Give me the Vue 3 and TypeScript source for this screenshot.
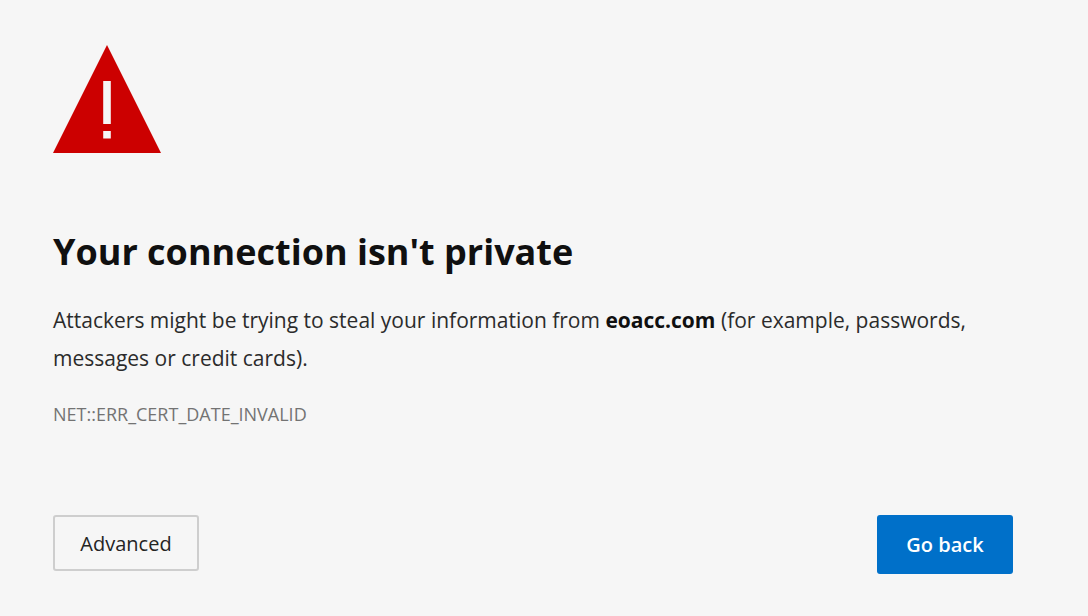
<script setup lang="ts">
import { ref } from 'vue'

const host = ref<string>('eoacc.com')
const errorCode = ref<string>('NET::ERR_CERT_DATE_INVALID')

function goBack(): void {
  window.history.back()
}
</script>

<template>
  <main class="page">
    <svg class="warning" viewBox="0 0 108 108" role="img" aria-label="Warning">
      <path d="M54 0 108 108H0Z" fill="#cc0000" />
      <path d="M50.2 36h7.6v43h-7.6zM50.2 86h7.6v7.5h-7.6z" fill="#f6f6f6" />
    </svg>
    <h1>Your connection isn't private</h1>
    <p class="message">
      Attackers might be trying to steal your information from <strong>{{ host }}</strong> (for example, passwords, messages or credit cards).
    </p>
    <p class="code">{{ errorCode }}</p>
    <div class="actions">
      <button type="button" class="secondary">Advanced</button>
      <button type="button" class="primary" @click="goBack">Go back</button>
    </div>
  </main>
</template>

<style>
body {
  background: #f6f6f6;
}
</style>

<style scoped>
.page {
  box-sizing: border-box;
  padding: 45px 75px 40px 53px;
  color: #101010;
  font-family: "Segoe UI", "Open Sans", "Noto Sans", sans-serif;
}
.warning {
  display: block;
  width: 108px;
  height: 108px;
}
h1 {
  margin: 73px 0 0;
  font-size: 36px;
  line-height: 52px;
  font-weight: 700;
}
.message {
  margin: 23px 0 0;
  color: #2b2b2b;
  font-size: 21px;
  line-height: 38px;
}
.message strong {
  color: #101010;
}
.code {
  margin: 23px 0 0;
  color: #737373;
  font-size: 18px;
  line-height: 28px;
}
.actions {
  display: flex;
  justify-content: space-between;
  align-items: flex-start;
  margin-top: 87px;
}
button {
  box-sizing: border-box;
  border-radius: 3px;
  font-family: inherit;
  font-size: 20px;
  line-height: 28px;
}
.secondary {
  width: 146px;
  height: 56px;
  padding: 2px 0 0;
  border: 2px solid #cecece;
  background: transparent;
  color: #242424;
}
.primary {
  width: 136px;
  height: 59px;
  padding: 0;
  border: 0;
  background: #0070c9;
  color: #fff;
  font-weight: 600;
}
</style>
